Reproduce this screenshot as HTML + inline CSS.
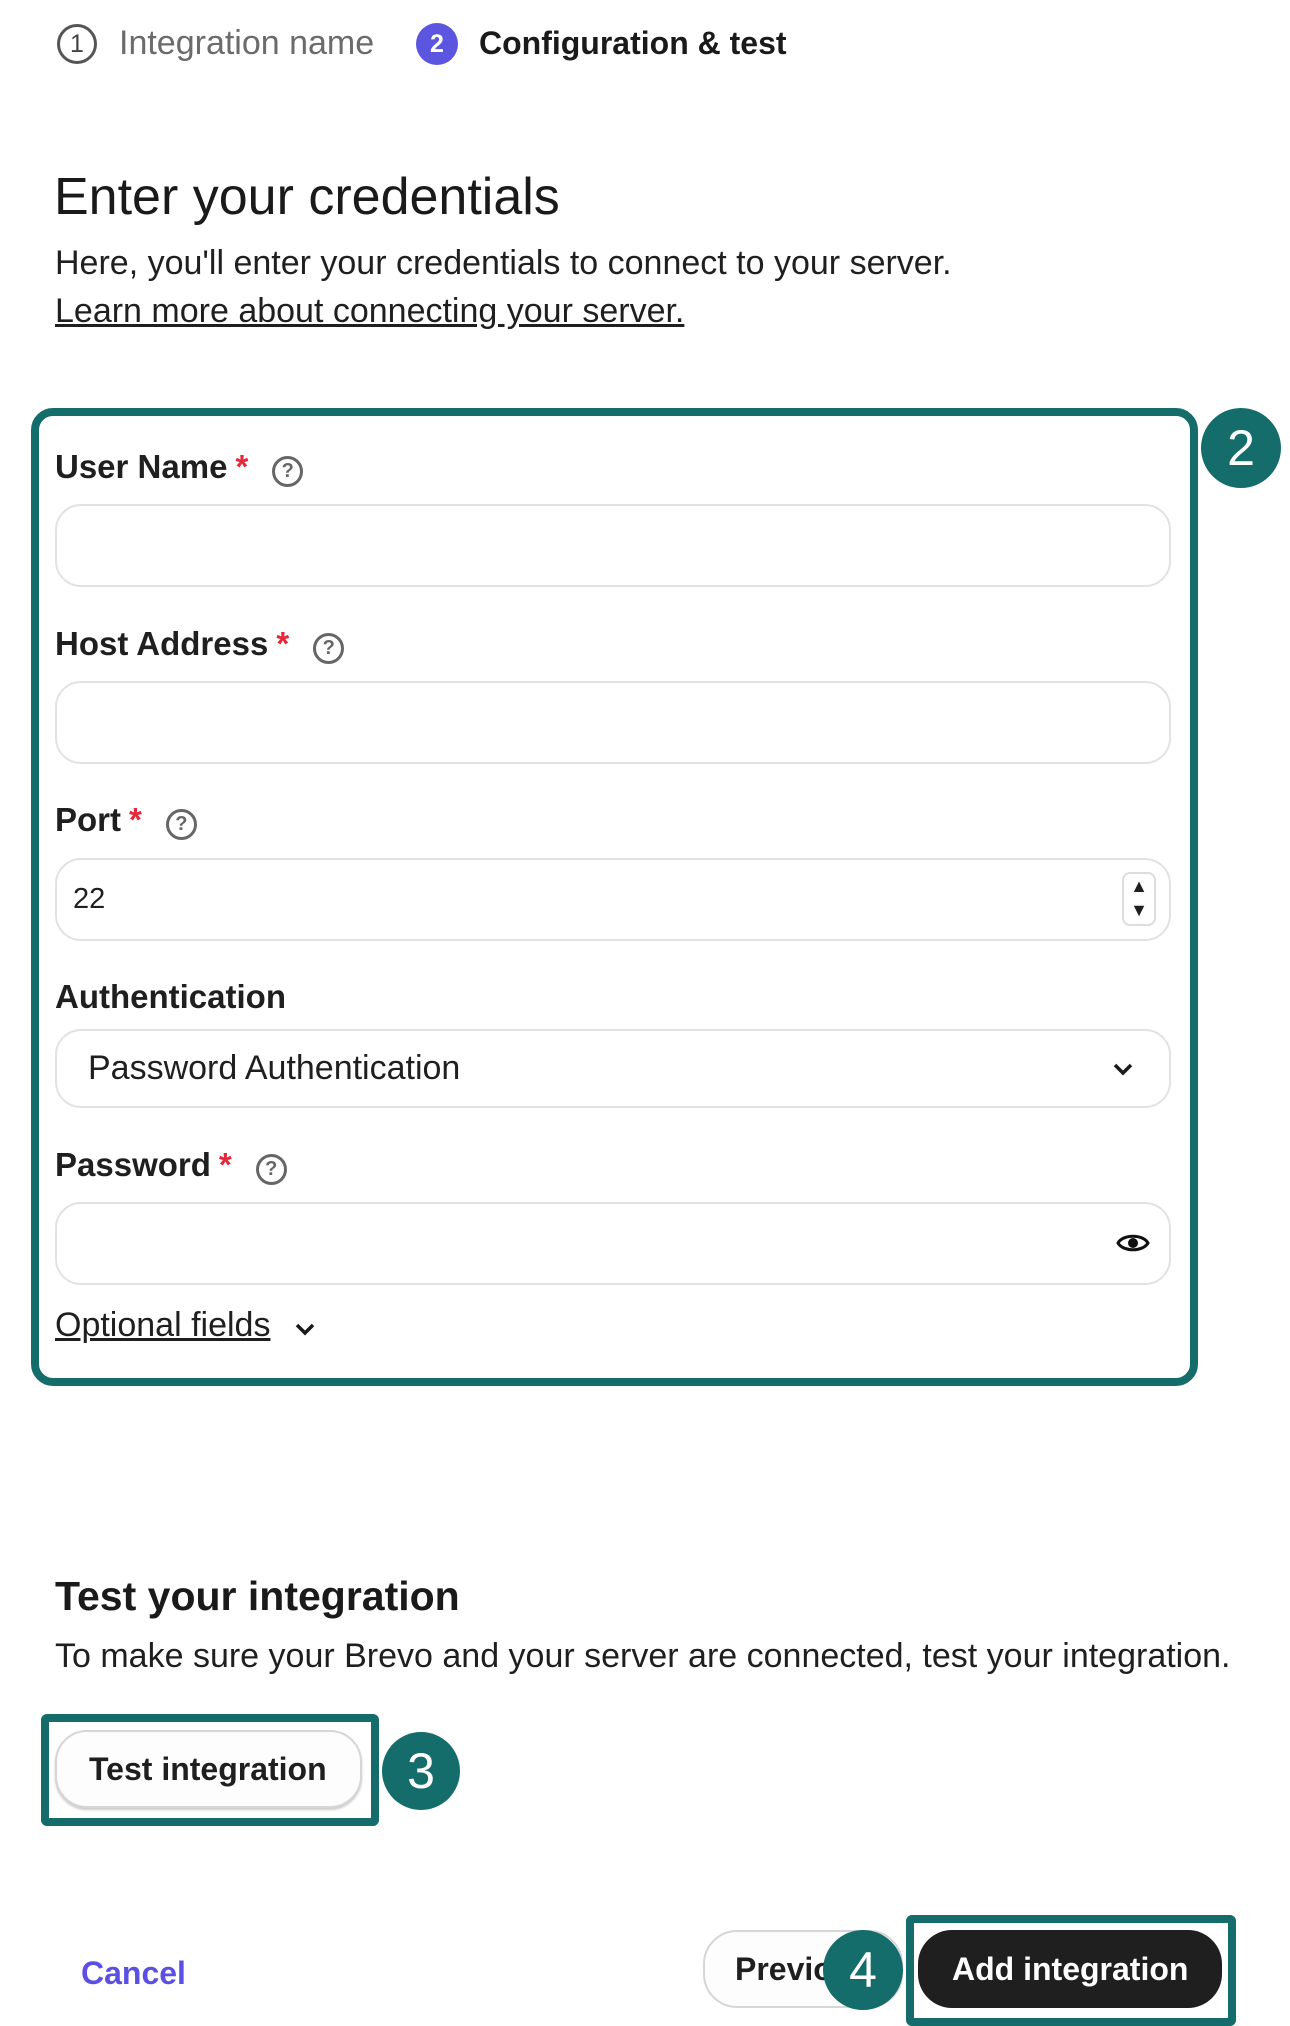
<!DOCTYPE html>
<html><head><meta charset="utf-8"><style>
*{box-sizing:border-box;margin:0;padding:0}
body{width:1290px;height:2026px;background:#fff;font-family:"Liberation Sans",sans-serif;color:#1f1f1f;position:relative;overflow:hidden}
.a{position:absolute;white-space:nowrap}
.lbl{font-weight:bold;font-size:33px;line-height:38px}
.star{color:#e5283a;margin-left:8px}
.q{display:inline-block;width:31px;height:31px;border:3px solid #666;border-radius:50%;font-size:20px;font-weight:bold;color:#666;text-align:center;line-height:25px;margin-left:24px;vertical-align:1px}
.inp{position:absolute;left:55px;width:1116px;height:83px;border:2px solid #e2e2e2;border-radius:26px;background:#fff}
.teal{position:absolute;border:8px solid #146c6b}
.badge{position:absolute;background:#146c6b;color:#fff;border-radius:50%;text-align:center;font-size:50px}
</style></head><body>
<div class="a" style="left:57px;top:24px;width:40px;height:40px;border:3px solid #555;border-radius:50%;text-align:center;font-size:25px;line-height:34px;color:#444">1</div>
<div class="a" style="left:119px;top:24px;font-size:34px;color:#6b6b6b">Integration name</div>
<div class="a" style="left:416px;top:23px;width:42px;height:42px;background:#5b55e0;border-radius:50%;text-align:center;font-size:25px;line-height:42px;color:#fff;font-weight:bold">2</div>
<div class="a" style="left:479px;top:25px;font-size:32px;font-weight:bold;color:#1a1a1a">Configuration &amp; test</div>

<div class="a" style="left:54px;top:167px;font-size:52px;color:#1a1a1a">Enter your credentials</div>
<div class="a" style="left:55px;top:244px;font-size:34px">Here, you'll enter your credentials to connect to your server.</div>
<div class="a" style="left:55px;top:292px;font-size:34px;text-decoration:underline">Learn more about connecting your server.</div>

<div class="teal" style="left:31px;top:408px;width:1167px;height:978px;border-radius:22px"></div>
<div class="badge" style="left:1201px;top:408px;width:80px;height:80px;line-height:80px">2</div>

<div class="a lbl" style="left:55px;top:448px">User Name<span class="star">*</span><span class="q">?</span></div>
<div class="inp" style="top:504px"></div>
<div class="a lbl" style="left:55px;top:625px">Host Address<span class="star">*</span><span class="q">?</span></div>
<div class="inp" style="top:681px"></div>
<div class="a lbl" style="left:55px;top:801px">Port<span class="star">*</span><span class="q">?</span></div>
<div class="inp" style="top:858px"></div>
<div class="a" style="left:73px;top:883px;font-size:29px">22</div>
<div class="a" style="left:1122px;top:872px;width:34px;height:54px;border:2px solid #ddd;border-radius:8px;font-size:18px;text-align:center;line-height:24px">▲<br>▼</div>
<div class="a lbl" style="left:55px;top:978px">Authentication</div>
<div class="inp" style="top:1029px;height:79px"></div>
<div class="a" style="left:88px;top:1049px;font-size:34px">Password Authentication</div>
<svg class="a" style="left:1110px;top:1058px" width="26" height="22" viewBox="0 0 26 22"><path d="M5 7l8 8 8-8" fill="none" stroke="#1a1a1a" stroke-width="3.5"/></svg>
<div class="a lbl" style="left:55px;top:1146px">Password<span class="star">*</span><span class="q">?</span></div>
<div class="inp" style="top:1202px"></div>
<svg class="a" style="left:1116px;top:1230px" width="34" height="26" viewBox="0 0 34 26"><path d="M2 13C7 4 27 4 32 13 27 22 7 22 2 13Z" fill="none" stroke="#111" stroke-width="3"/><circle cx="17" cy="13" r="5" fill="#111"/></svg>
<div class="a" style="left:55px;top:1306px;font-size:34px;text-decoration:underline">Optional fields</div>
<svg class="a" style="left:292px;top:1318px" width="26" height="22" viewBox="0 0 26 22"><path d="M5 7l8 8 8-8" fill="none" stroke="#1a1a1a" stroke-width="3.5"/></svg>

<div class="a" style="left:55px;top:1573px;font-size:41px;font-weight:bold;color:#1a1a1a">Test your integration</div>
<div class="a" style="left:55px;top:1637px;font-size:34px">To make sure your Brevo and your server are connected, test your integration.</div>

<div class="teal" style="left:41px;top:1714px;width:338px;height:112px;border-radius:6px"></div>
<div class="a" style="left:55px;top:1730px;width:307px;height:78px;border:2px solid #d6d6d6;border-radius:32px;background:#fdfdfd;box-shadow:0 2px 2px #ccc"></div>
<div class="a" style="left:89px;top:1751px;font-size:32px;font-weight:bold">Test integration</div>
<div class="badge" style="left:382px;top:1732px;width:78px;height:78px;line-height:78px">3</div>

<div class="a" style="left:81px;top:1955px;font-size:32px;font-weight:bold;color:#5b50e2">Cancel</div>
<div class="a" style="left:703px;top:1930px;width:200px;height:78px;border:2px solid #d6d6d6;border-radius:34px;background:#fdfdfd;overflow:hidden"><span style="position:absolute;left:30px;top:19px;font-size:32px;font-weight:bold">Previous</span></div>
<div class="badge" style="left:823px;top:1930px;width:80px;height:80px;line-height:80px">4</div>
<div class="teal" style="left:906px;top:1915px;width:330px;height:111px;border-radius:6px"></div>
<div class="a" style="left:918px;top:1930px;width:304px;height:78px;background:#1f1f1f;border-radius:34px"></div>
<div class="a" style="left:952px;top:1951px;font-size:32px;font-weight:bold;color:#fff">Add integration</div>
</body></html>
